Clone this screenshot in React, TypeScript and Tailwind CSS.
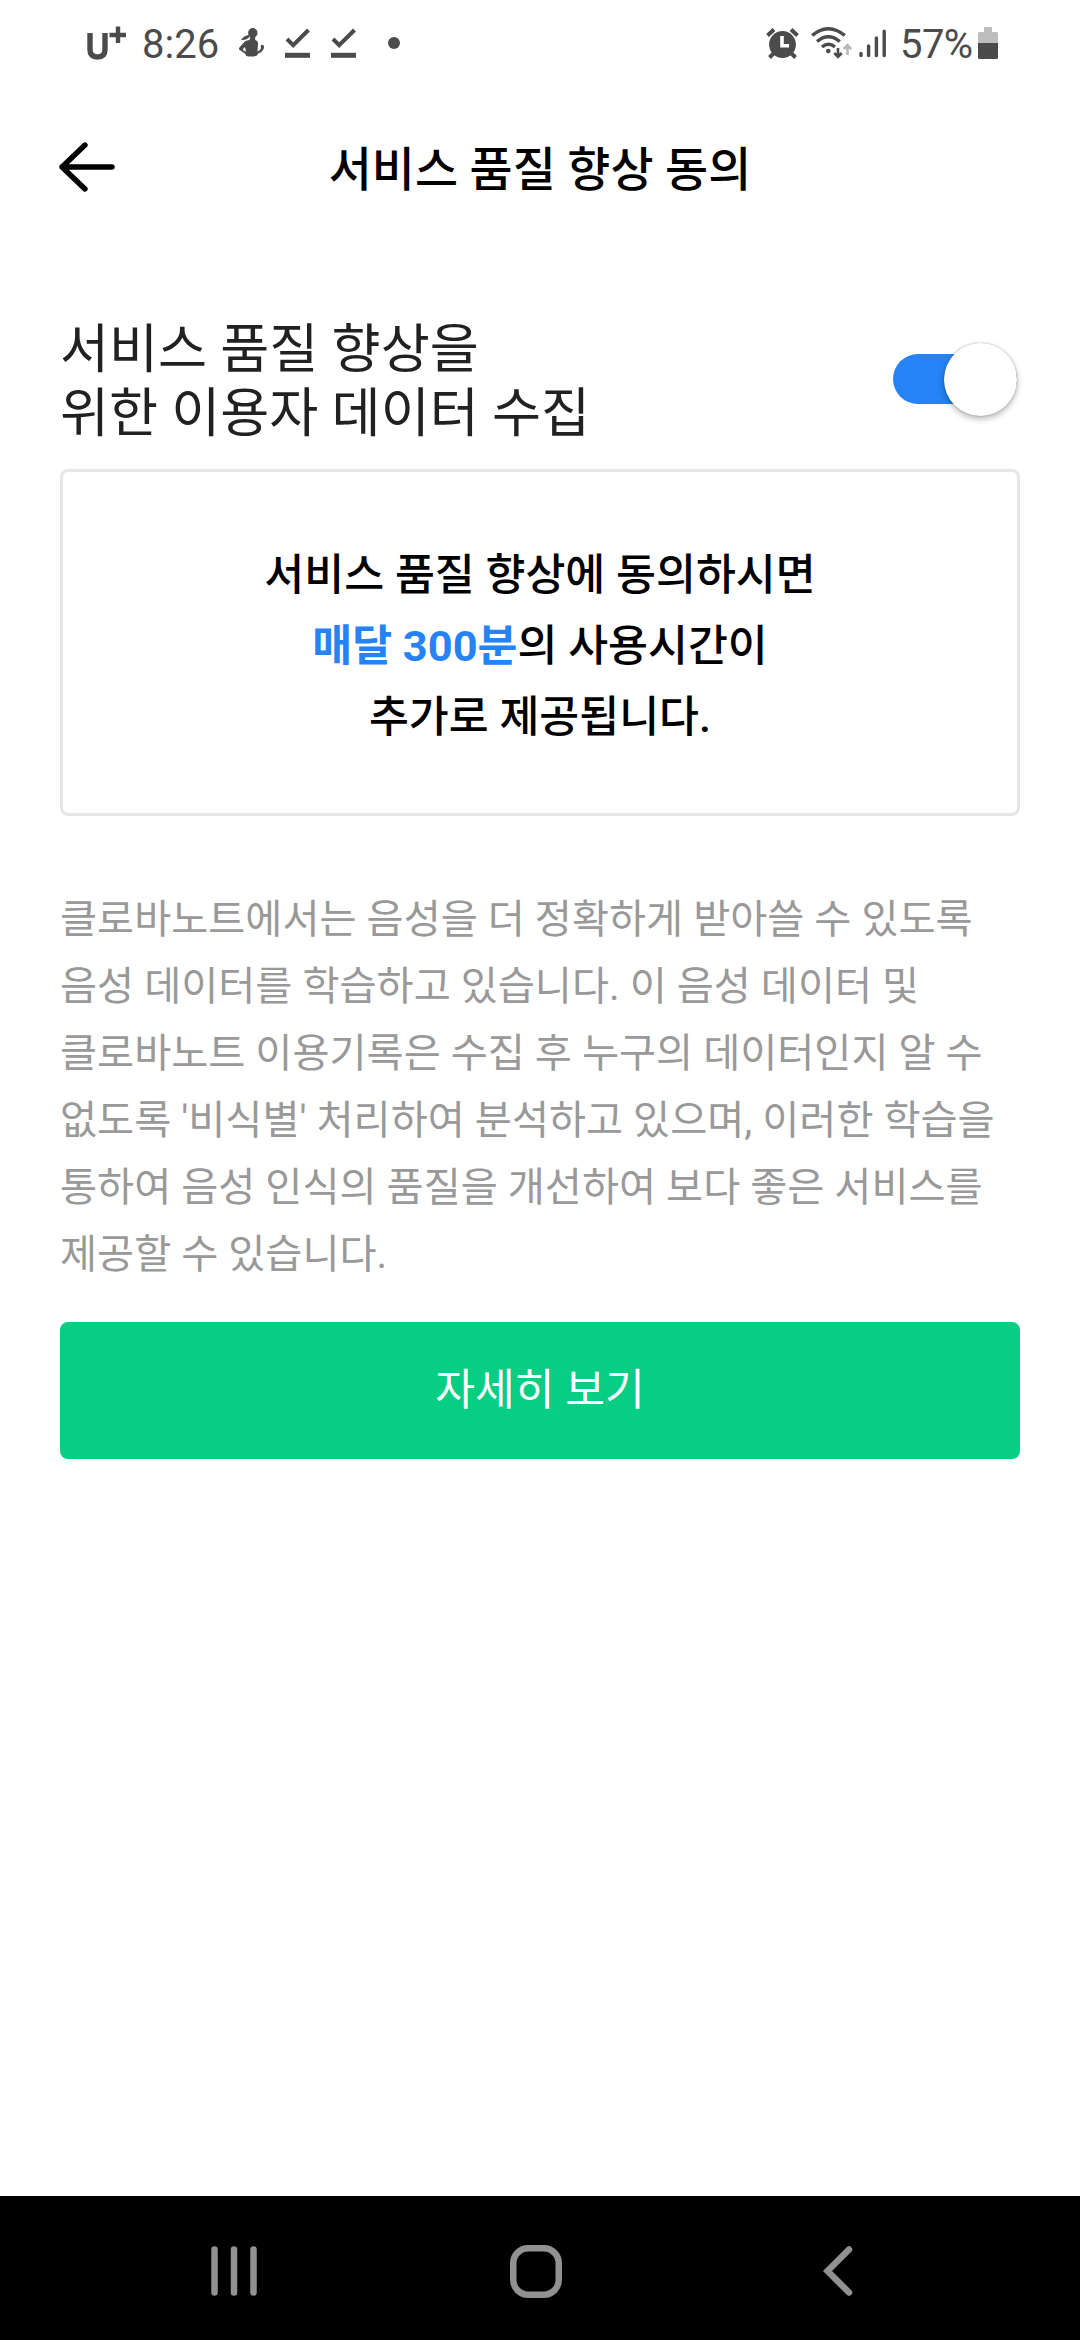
import * as React from "react";

const noticeLines = [
  "클로바노트에서는 음성을 더 정확하게 받아쓸 수 있도록",
  "음성 데이터를 학습하고 있습니다. 이 음성 데이터 및",
  "클로바노트 이용기록은 수집 후 누구의 데이터인지 알 수",
  "없도록 '비식별' 처리하여 분석하고 있으며, 이러한 학습을",
  "통하여 음성 인식의 품질을 개선하여 보다 좋은 서비스를",
  "제공할 수 있습니다."
];

const CarrierIcon = () => (
  <svg width="40" height="34" viewBox="0 0 40 34" fill="none" stroke="#4b4b4b">
    <path d="M3 7v16.5q0 7.5 7.5 7.5t7.5-7.5V7" strokeWidth="5.4" />
    <path d="M22.5 9H39M31 .5V17" strokeWidth="4.4" />
  </svg>
);

const PersonIcon = () => (
  <svg width="26" height="30" viewBox="0 0 26 30" fill="#4b4b4b">
    <ellipse cx="13.8" cy="4.9" rx="4.7" ry="4.9" />
    <path d="M2 11.8Q5 7.600 9.800 7l1 1.800Q8 12.400 2 11.800Z" />
    <path
      fillRule="evenodd"
      d="M11.500 8h4.700v4q3.400 1 2.700 5l-.4 6.500q3.200-1.200 3.600-3.600-1.200-2.700.9-3.200 2.300 0 2 2.800-.6 4-5.800 6l-1.500 2.300q-5.200 1.400-10.500.2l-1-2.300-5.500-3.700q-1.200-1.100-.3-2.500l5-5.500q1.200-1.700 5.100-2ZM5.800 19l-1.800 2q-.4.800.6 1.500l2 1.200q.7-1.400-.8-4.700Z"
    />
  </svg>
);

const DownloadDoneIcon = () => (
  <svg width="26" height="31" viewBox="0 0 26 31" fill="none" stroke="#4b4b4b">
    <path d="M2 11l6.2 6.200L23.500 2" strokeWidth="4" />
    <path d="M0 27.300h25" strokeWidth="5" />
  </svg>
);

const AlarmIcon = () => (
  <svg width="33" height="31" viewBox="0 0 33 31" fill="none" stroke="#4b4b4b">
    <circle cx="16.5" cy="16.5" r="13.4" fill="#4b4b4b" stroke="none" />
    <path d="M1.500 7.500l6.500-6M31.500 7.500l-6.500-6" strokeWidth="4" />
    <path d="M8 25l-4.500 4.500M25 25l4.500 4.500" strokeWidth="4" />
    <path d="M16 8v9.700h7" stroke="#fff" strokeWidth="3.600" />
  </svg>
);

const WifiIcon = () => (
  <svg width="41" height="32" viewBox="0 0 41 32" fill="none" stroke="#4b4b4b">
    <path d="M1.200 8.500q15.800-13.500 32.600 0M6 14.500q11.300-9.500 22.800 0M11 20q6.500-5.500 13 0" strokeWidth="3.400" />
    <circle cx="17.3" cy="24" r="2.3" fill="#4b4b4b" stroke="none" />
    <path d="M27 21v8.500M23.300 26l3.700 3.800 3.700-3.800" strokeWidth="2.600" />
    <path d="M36.500 28v-9M32.800 22l3.700-3.800 3.700 3.800" stroke="#b8b8b8" strokeWidth="2.600" />
  </svg>
);

const SignalIcon = () => (
  <svg width="28" height="29" viewBox="0 0 28 29" fill="none" stroke="#4b4b4b" strokeWidth="3.4" strokeLinecap="round">
    <path d="M2 24.500v2M9.600 17v9.500M17.400 9v17.500M25.200 2.200v24.300" />
  </svg>
);

const BatteryIcon = () => (
  <svg width="20" height="32" viewBox="0 0 20 32">
    <path d="M6 0h8v5h4.500Q20 5 20 6.500V17H0V6.500Q0 5 1.500 5H6Z" fill="#bdbdbd" />
    <path d="M0 16h20v14.500q0 1.500-1.500 1.500h-17Q0 32 0 30.500Z" fill="#4b4b4b" />
  </svg>
);

const StatusBar: React.FC = () => (
  <div className="flex h-[86px] items-center justify-between pr-[82px] pl-[87px] text-[40px] leading-none text-[#4b4b4b]">
    <div className="flex items-center">
      <CarrierIcon />
      <span className="ml-[15px] w-[81px] pt-[3px]">8:26</span>
      <span className="ml-4"><PersonIcon /></span>
      <span className="ml-5"><DownloadDoneIcon /></span>
      <span className="ml-5"><DownloadDoneIcon /></span>
      <span className="ml-[31px] h-3 w-3 rounded-full bg-[#4b4b4b]" />
    </div>
    <div className="flex items-center">
      <AlarmIcon />
      <span className="ml-3"><WifiIcon /></span>
      <span className="ml-[7px]"><SignalIcon /></span>
      <span className="ml-[13px] w-[78px] pt-[3px] tracking-[-0.6px]">57%</span>
      <BatteryIcon />
    </div>
  </div>
);

const Header: React.FC = () => (
  <header className="grid h-[162px] grid-cols-[120px_1fr_120px] items-center px-[58px]">
    <button type="button" aria-label="뒤로">
      <svg width="58" height="52" viewBox="0 0 58 52" fill="none" stroke="#000" strokeWidth="5.4" strokeLinecap="round" strokeLinejoin="round">
        <path d="M27 4L4 26l23 22M4 26h50" />
      </svg>
    </button>
    <h1 className="pt-[5px] text-center text-[46.8px] leading-[64px] font-medium whitespace-nowrap text-black">
      서비스 품질 향상 동의
    </h1>
  </header>
);

const Toggle = ({ checked }: { checked: boolean }) => (
  <button type="button" role="switch" aria-checked={checked} className="flex h-[50px] w-[124px] items-center justify-end rounded-full bg-[#2583f5]">
    <span className="h-[73px] w-[73px] shrink-0 rounded-full bg-white shadow-[0_3px_6px_rgba(0,0,0,0.28),0_0_2px_rgba(0,0,0,0.3)]" />
  </button>
);

export default function App() {
  return (
    <div className="flex h-[2340px] w-[1080px] flex-col bg-white font-['Roboto','Noto_Sans_CJK_KR',sans-serif]">
      <StatusBar />
      <Header />

      <main className="flex flex-1 flex-col px-[60px] pt-16">
        <section className="flex items-center justify-between pr-[3px]">
          <h2 className="pt-[6px] text-[53.3px] leading-[64px] text-[#212121]">
            <span className="block">서비스 품질 향상을</span>
            <span className="block">위한 이용자 데이터 수집</span>
          </h2>
          <Toggle checked />
        </section>

        <section className="mt-[23px] flex h-[347px] flex-col items-center justify-center rounded-lg border-[3px] border-[#e6e6e6] pt-[7px] text-center text-[43.4px] leading-[71px] font-medium text-black">
          <p>서비스 품질 향상에 동의하시면</p>
          <p>
            <strong className="font-bold text-[#2583f5]">매달 300분</strong>의 사용시간이
          </p>
          <p>추가로 제공됩니다.</p>
        </section>

        <div className="mt-[70px] text-[40.3px] leading-[67px] whitespace-nowrap text-[#999]">
          {noticeLines.map((line) => (
            <p key={line}>{line}</p>
          ))}
        </div>

        <button type="button" className="mt-[34px] h-[137px] rounded-lg bg-[#07ce82] pt-px text-[43.2px] leading-[64px] text-white">
          자세히 보기
        </button>
      </main>

      <nav className="flex h-[144px] items-center bg-black pt-[6px] pl-[211px]">
        <svg width="46" height="50" viewBox="0 0 46 50" stroke="#919191" strokeWidth="6.5" strokeLinecap="round">
          <path d="M3.500 3.500v43M23 3.500v43M42.500 3.500v43" />
        </svg>
        <svg className="ml-[253px]" width="52" height="53" viewBox="0 0 52 53" fill="none" stroke="#919191" strokeWidth="6.5">
          <rect x="3.25" y="3.25" width="45.5" height="46.5" rx="15" />
        </svg>
        <svg className="ml-[261px]" width="30" height="50" viewBox="0 0 30 50" fill="none" stroke="#919191" strokeWidth="6.5" strokeLinecap="round">
          <path d="M26 3.500L4.500 25 26 46.500" />
        </svg>
      </nav>
    </div>
  );
}
